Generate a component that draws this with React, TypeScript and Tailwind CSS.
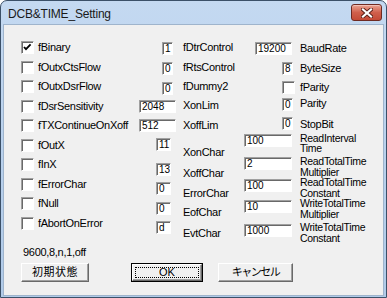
import React from 'react';

const sunken =
  'border border-t-[#a0a0a0] border-l-[#a0a0a0] border-b-white border-r-white shadow-[inset_1px_1px_0_#696969] bg-white';

function Edit({ text, cls }: { text: string; cls: string }) {
  return (
    <div className={`h-[13px] shrink-0 pl-[2px] text-[10px] tracking-normal leading-[11px] overflow-hidden whitespace-nowrap ${sunken} ${cls}`}>
      {text}
    </div>
  );
}

function Check({ on, cls = '' }: { on?: boolean; cls?: string }) {
  return (
    <div className={`w-[13px] h-[13px] shrink-0 relative ${sunken} ${cls}`}>
      {on && (
        <svg width="11" height="11" viewBox="0 0 11 11" className="absolute left-0 top-0">
          <path d="M2 5 L4 7.2 L8.6 2.4" stroke="#000" strokeWidth="1.8" fill="none" />
        </svg>
      )}
    </div>
  );
}

function Btn({ children, cls, def }: { children: React.ReactNode; cls: string; def?: boolean }) {
  const raised =
    'border border-t-white border-l-white border-r-[#696969] border-b-[#696969] shadow-[inset_-1px_-1px_0_#a0a0a0] bg-[#f0f0f0]';
  if (def) {
    return (
      <div className={`h-[19px] border border-black ${cls}`}>
        <div className={`h-full ${raised} flex items-center justify-center p-[2px]`}>
          <div className="w-full h-full border border-dotted border-black flex items-center justify-center leading-[11px]">
            {children}
          </div>
        </div>
      </div>
    );
  }
  return <div className={`h-[19px] ${raised} flex items-center justify-center ${cls}`}>{children}</div>;
}

const leftRows = [
  { label: 'fBinary', on: true, h: 'h-[20px]' },
  { label: 'fOutxCtsFlow', h: 'h-[19px]' },
  { label: 'fOutxDsrFlow', h: 'h-[20px]' },
  { label: 'fDsrSensitivity', h: 'h-[19px]' },
  { label: 'fTXContinueOnXoff', h: 'h-[20px]' },
  { label: 'fOutX', h: 'h-[19px]' },
  { label: 'fInX', h: 'h-[20px]' },
  { label: 'fErrorChar', h: 'h-[19px]' },
  { label: 'fNull', h: 'h-[20px]' },
  { label: 'fAbortOnError', h: 'h-[13px]' },
];

const midRows = [
  { v: '1', box: 'ml-[23px] w-[11px]', label: 'fDtrControl', h: 'h-[20px]', lt: '-mt-[1px]' },
  { v: '0', box: 'ml-[23px] w-[11px]', label: 'fRtsControl', h: 'h-[20px]', lt: '-mt-[1px]' },
  { v: '0', box: 'ml-[23px] w-[11px]', label: 'fDummy2', h: 'h-[18px]', lt: '-mt-[2px]' },
  { v: '2048', box: 'ml-0 w-[37px]', label: 'XonLim', h: 'h-[19px]', lt: '-mt-[1px]' },
  { v: '512', box: 'ml-0 w-[37px]', label: 'XoffLim', h: 'h-[19px]', lt: 'mt-0' },
  { v: '11', box: 'ml-[17px] w-[15px]', label: 'XonChar', h: 'h-[25px]', lt: 'mt-[8px]' },
  { v: '13', box: 'ml-[17px] w-[15px]', label: 'XoffChar', h: 'h-[19px]', lt: 'mt-[4px]' },
  { v: '0', box: 'ml-[17px] w-[15px]', label: 'ErrorChar', h: 'h-[20px]', lt: 'mt-[5px]' },
  { v: '0', box: 'ml-[17px] w-[15px]', label: 'EofChar', h: 'h-[19px]', lt: 'mt-[4px]' },
  { v: 'd', box: 'ml-[17px] w-[15px]', label: 'EvtChar', h: 'h-[24px]', lt: 'mt-[6px]' },
];

const rightRows: { v?: string; box: string; label: string[]; h: string; lt: string }[] = [
  { v: '19200', box: 'ml-[11px] w-[37px]', label: ['BaudRate'], h: 'h-[20px]', lt: 'mt-0' },
  { v: '8', box: 'ml-[38px] w-[11px]', label: ['ByteSize'], h: 'h-[19px]', lt: 'mt-0' },
  { box: 'ml-[38px]', label: ['fParity'], h: 'h-[17px]', lt: 'mt-0' },
  { v: '0', box: 'ml-[38px] w-[11px]', label: ['Parity'], h: 'h-[19px]', lt: '-mt-[1px]' },
  { v: '0', box: 'ml-[38px] w-[11px]', label: ['StopBit'], h: 'h-[17px]', lt: 'mt-[1px]' },
  { v: '100', box: 'ml-0 w-[48px]', label: ['ReadInterval', 'Time'], h: 'h-[24px]', lt: '-mt-[1px]' },
  { v: '2', box: 'ml-0 w-[48px]', label: ['ReadTotalTime', 'Multiplier'], h: 'h-[22px]', lt: '-mt-[1px]' },
  { v: '100', box: 'ml-0 w-[48px]', label: ['ReadTotalTime', 'Constant'], h: 'h-[21px]', lt: '-mt-[2px]' },
  { v: '10', box: 'ml-0 w-[48px]', label: ['WriteTotalTime', 'Multiplier'], h: 'h-[24px]', lt: '-mt-[2px]' },
  { v: '1000', box: 'ml-0 w-[48px]', label: ['WriteTotalTime', 'Constant'], h: 'h-[22px]', lt: '-mt-[2px]' },
];

export default function App() {
  return (
    <div className="w-[387px] h-[298px] overflow-hidden bg-white font-['Liberation_Sans','Noto_Sans_CJK_JP',Arial,sans-serif] text-[11px] tracking-[-0.3px] text-black">
      <div className="w-[387px] h-[298px] rounded-t-[7px] border border-[#3b5068] bg-gradient-to-b from-[#c4d9f1] via-[#b9d1ed] to-[#b0cae8] flex flex-col">
        {/* title bar */}
        <div className="h-[23px] flex justify-between pl-[7px] pr-[4px]">
          <div className="mt-[2px] leading-[22px] text-[12px] tracking-[-0.2px] text-[#1a1a1a]">DCB&amp;TIME_Setting</div>
          <div className="mt-[3px] w-[31px] h-[17px] rounded-[3px] border border-[#6e2a22] bg-gradient-to-b from-[#e9a393] via-[#d0604c] to-[#c44a36] shadow-[inset_0_1px_0_#f3c1b6] flex items-center justify-center">
            <svg width="12" height="10" viewBox="0 0 12 10">
              <path d="M2 1.5 L10 8.5 M10 1.5 L2 8.5" stroke="#5a2018" strokeWidth="4" strokeLinecap="square" />
              <path d="M2 1.5 L10 8.5 M10 1.5 L2 8.5" stroke="#ffffff" strokeWidth="2.2" strokeLinecap="square" />
            </svg>
          </div>
        </div>

        {/* client */}
        <div className="mx-[2px] h-[272px] border border-[#9fb4cc] bg-[#f0f0f0] flex flex-col">
          <div className="h-[221px] pt-[16px] flex">
            <div className="ml-[17px] w-[118px] shrink-0 flex flex-col">
              {leftRows.map((r) => (
                <div key={r.label} className={`flex items-start ${r.h}`}>
                  <Check on={r.on} />
                  <span className="ml-[4px] leading-[13px] whitespace-nowrap">{r.label}</span>
                </div>
              ))}
            </div>

            <div className="w-[105px] shrink-0 mt-[1px] flex flex-col">
              {midRows.map((r) => (
                <div key={r.label} className={`flex items-start ${r.h}`}>
                  <div className="w-[44px] shrink-0 flex">
                    <Edit text={r.v} cls={r.box} />
                  </div>
                  <span className={`leading-[12px] whitespace-nowrap ${r.lt}`}>{r.label}</span>
                </div>
              ))}
            </div>

            <div className="flex-1 mt-[1px] flex flex-col">
              {rightRows.map((r, i) => (
                <div key={i} className={`flex items-start ${r.h}`}>
                  <div className="w-[56px] shrink-0 flex">
                    {r.v !== undefined ? <Edit text={r.v} cls={r.box} /> : <Check cls={r.box} />}
                  </div>
                  <div className={`${r.label.length > 1 ? 'text-[10.5px] leading-[10.5px]' : 'leading-[13px]'} whitespace-nowrap ${r.lt}`}>
                    {r.label.map((l) => (
                      <div key={l}>{l}</div>
                    ))}
                  </div>
                </div>
              ))}
            </div>
          </div>

          <div className="ml-[19px] h-[12px] leading-[12px]">9600,8,n,1,off</div>

          <div className="mt-[5px] flex">
            <Btn cls="ml-[17px] w-[68px]">
              <span className="text-[11px] tracking-[0.5px]">初期状態</span>
            </Btn>
            <Btn cls="ml-[42px] w-[72px]" def>
              <span className="tracking-[0px]">OK</span>
            </Btn>
            <Btn cls="ml-[15px] w-[75px]">
              <span className="text-[11px] tracking-[-1.5px]">キャンセル</span>
            </Btn>
          </div>
        </div>
      </div>
    </div>
  );
}
